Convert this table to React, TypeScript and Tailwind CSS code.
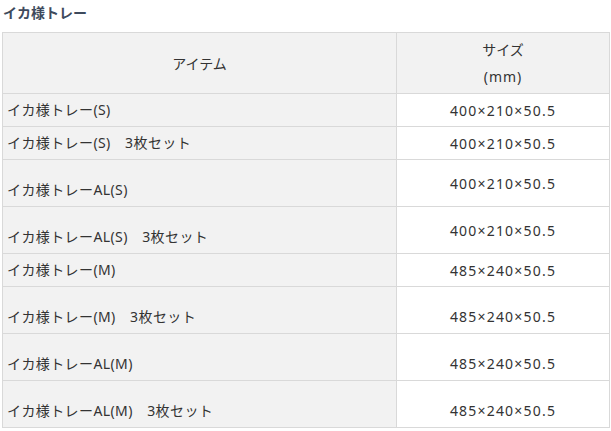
import React from 'react';

const rows = [
  { name: 'イカ様トレー(S)', size: '400×210×50.5', h: 'h-[33px]', bottom: false },
  { name: 'イカ様トレー(S)\u30003枚セット', size: '400×210×50.5', h: 'h-[33px]', bottom: false },
  { name: 'イカ様トレーAL(S)', size: '400×210×50.5', h: 'h-[47px]', bottom: false },
  { name: 'イカ様トレーAL(S)\u30003枚セット', size: '400×210×50.5', h: 'h-[47px]', bottom: false },
  { name: 'イカ様トレー(M)', size: '485×240×50.5', h: 'h-[33px]', bottom: false },
  { name: 'イカ様トレー(M)\u30003枚セット', size: '485×240×50.5', h: 'h-[47px]', bottom: true },
  { name: 'イカ様トレーAL(M)', size: '485×240×50.5', h: 'h-[47px]', bottom: true },
  { name: 'イカ様トレーAL(M)\u30003枚セット', size: '485×240×50.5', h: 'h-[47px]', bottom: true },
];

const App = () => {
  return (
    <div
      className="bg-white w-[611px] h-[431px] overflow-hidden text-[#333333]"
      style={{ fontFamily: '"Noto Sans", "Noto Sans CJK JP", sans-serif' }}
    >
      <h2 className="pl-[3px] pt-[3px] h-[32px] text-[14px] leading-[20px] font-bold text-[#3e4a5c]">
        イカ様トレー
      </h2>
      <table className="ml-[2px] w-[608px] border-collapse table-fixed text-[14px]">
        <colgroup>
          <col className="w-[394px]" />
          <col />
        </colgroup>
        <thead>
          <tr className="h-[61px]">
            <th className="border border-[#d9d9d9] bg-[#f2f2f2] font-normal text-center align-middle leading-[27px]">
              アイテム
            </th>
            <th className="border border-[#d9d9d9] bg-[#f2f2f2] font-normal text-center align-middle leading-[27px]">
              サイズ
              <br />
              <span className="tracking-[1px]">(mm)</span>
            </th>
          </tr>
        </thead>
        <tbody>
          {rows.map((row, i) => (
            <tr key={i} className={row.h}>
              <td className="border border-[#d9d9d9] bg-[#f2f2f2] px-[4px] pb-[3px] align-bottom leading-[27px] tracking-[0.4px] whitespace-pre">
                {row.name}
              </td>
              <td
                className={`border border-[#d9d9d9] bg-white text-center leading-[27px] tracking-[1.2px] ${row.bottom ? 'align-bottom pb-[3px]' : 'align-middle'}`}
              >
                {row.size}
              </td>
            </tr>
          ))}
        </tbody>
      </table>
    </div>
  );
};

export default App;
